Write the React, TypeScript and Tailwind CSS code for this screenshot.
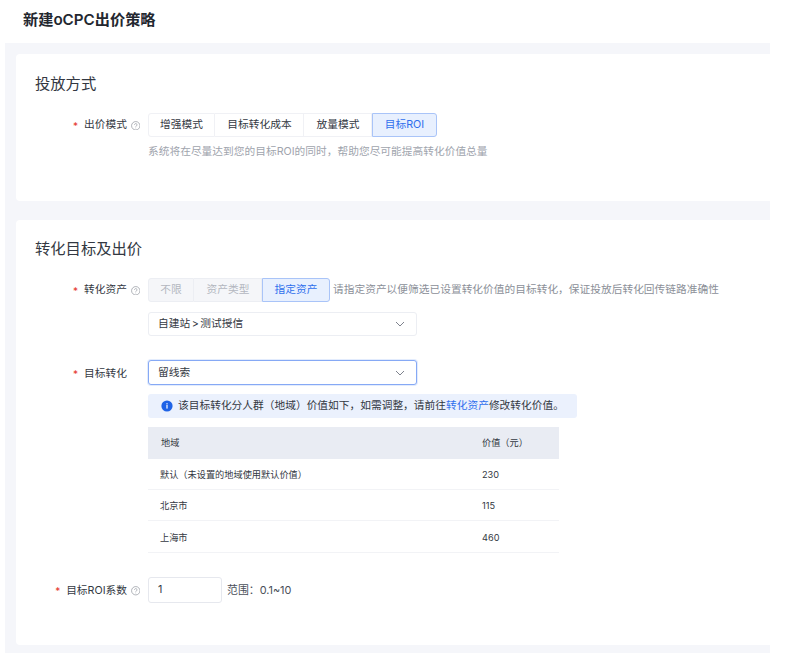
import React from "react";

const FONT = "font-['Inter','Noto_Sans_CJK_SC',sans-serif]";

function Help() {
  return (
    <svg width="9.5" height="9.5" viewBox="0 0 10 10" fill="none" className="ml-[3.5px] shrink-0 text-[#8b8f98]">
      <circle cx="5" cy="5" r="4.4" stroke="currentColor" strokeWidth="0.7" />
      <path d="M3.7 4a1.3 1.3 0 1 1 2 1.1c-.5.3-.7.5-.7 1" stroke="currentColor" strokeWidth="0.7" fill="none" />
      <circle cx="5" cy="7.3" r="0.45" fill="currentColor" />
    </svg>
  );
}

function Chevron() {
  return (
    <svg width="10" height="6" viewBox="0 0 10 6" fill="none" className="text-[#6f7480]">
      <path d="M1 1l4 4 4-4" stroke="currentColor" strokeWidth="0.9" />
    </svg>
  );
}

function Label({ text, help, tall }: { text: string; help?: boolean; tall?: boolean }) {
  return (
    <div
      className={
        "flex w-[113px] shrink-0 items-center justify-end pr-[8px] text-[10.72px] text-[#333842] " +
        (tall ? "h-[26px] pt-[2px]" : "h-6 pt-[1px]")
      }
    >
      <span className="mr-[6px] text-[10px] leading-none text-[#e5352b]">*</span>
      <span>{text}</span>
      {help ? <Help /> : <span className="w-[13px]" />}
    </div>
  );
}

function Seg({ items, active, disabled }: { items: [string, number][]; active: string; disabled?: boolean }) {
  return (
    <div className="flex h-6 text-[10.72px]">
      {items.map(([t, w], i) => {
        const on = t === active;
        return (
          <div
            key={t}
            style={{ width: w }}
            className={
              "flex items-center justify-center border pt-[1px] " +
              (on
                ? "rounded-r-[3px] border-[#a9c4f8] bg-[#e8f0fe] text-[#2f6fed]"
                : disabled
                  ? "border-[#eceef3] bg-[#f5f6f9] text-[#b3b7bf] " + (i === 0 ? "rounded-l-[3px]" : "border-l-0 pl-[1px]")
                  : "border-[#f0f1f5] bg-white text-[#333842] " + (i === 0 ? "rounded-l-[3px]" : "border-l-0 pl-[1px]"))
            }
          >
            {t}
          </div>
        );
      })}
    </div>
  );
}

function Select({ text, focus }: { text: string; focus?: boolean }) {
  return (
    <div
      className={
        "flex w-[269px] items-center justify-between rounded-[3px] border bg-white pl-[9px] pr-[11px] text-[10.72px] text-[#333842] " +
        (focus ? "h-[25px] border-[#86a9f5] shadow-[0_0_0_1px_#e3ecfd]" : "h-6 border-[#eceef3]")
      }
    >
      <span className="pt-[1px] [word-spacing:-1.5px]">{text}</span>
      <Chevron />
    </div>
  );
}

const rows: [string, string, string][] = [
  ["默认（未设置的地域使用默认价值）", "230", "h-[31px] pt-[1px]"],
  ["北京市", "115", "h-[31px] pt-[2px]"],
  ["上海市", "460", "h-[32px] pt-[2px]"],
];

export default function App() {
  return (
    <div className={"h-[663px] w-[785px] overflow-hidden bg-white " + FONT}>
      <div className="flex h-[43px] items-center pb-[3px] pl-[23px] text-[15.2px] font-semibold text-[#23272f]">
        新建oCPC出价策略
      </div>
      <div className="ml-[5px] h-[610px] w-[765px] bg-[#f5f6fa] pl-[11px] pt-[11px]">
        <section className="h-[147px] rounded-l-[4px] bg-white pl-[19px] pt-[20px]">
          <h2 className="text-[15.3px] leading-[20px] text-[#333842]">投放方式</h2>
          <div className="mt-[19px] flex">
            <Label text="出价模式" help />
            <div>
              <Seg items={[["增强模式", 67], ["目标转化成本", 89], ["放量模式", 68], ["目标ROI", 65]]} active="目标ROI" />
              <p className="mt-[7px] text-[10.72px] leading-[15px] text-[#a0a4ad]">
                系统将在尽量达到您的目标ROI的同时，帮助您尽可能提高转化价值总量
              </p>
            </div>
          </div>
        </section>
        <section className="mt-[19px] h-[425px] rounded-l-[4px] bg-white pl-[19px] pt-[19px]">
          <h2 className="text-[15.3px] leading-[20px] text-[#333842]">转化目标及出价</h2>
          <div className="mt-[19px] flex">
            <Label text="转化资产" help />
            <div>
              <div className="flex items-center">
                <Seg items={[["不限", 46], ["资产类型", 68], ["指定资产", 68]]} active="指定资产" disabled />
                <span className="ml-[3px] whitespace-nowrap pt-[1px] text-[10.72px] text-[#8b8f98]">
                  请指定资产以便筛选已设置转化价值的目标转化，保证投放后转化回传链路准确性
                </span>
              </div>
              <div className="mt-[10px]">
                <Select text="自建站 > 测试授信" />
              </div>
            </div>
          </div>
          <div className="mt-[24px] flex">
            <Label text="目标转化" tall />
            <div>
              <Select text="留线索" focus />
              <div className="mt-[9px] flex h-6 w-[429px] items-center rounded-[3px] bg-[#ebf1fd] pl-[13px] text-[10.72px] text-[#333842]">
                <svg width="12" height="12" viewBox="0 0 12 12" className="mr-[5px] shrink-0">
                  <circle cx="6" cy="6" r="5.6" fill="#1f63e6" />
                  <rect x="5.4" y="5" width="1.2" height="3.6" fill="#fff" />
                  <rect x="5.4" y="3.2" width="1.2" height="1.2" fill="#fff" />
                </svg>
                <span className="whitespace-nowrap pt-[1px]">
                  该目标转化分人群（地域）价值如下，如需调整，请前往<span className="text-[#2f6fed]">转化资产</span>修改转化价值。
                </span>
              </div>
              <div className="mt-[9px] w-[411px] text-[9.2px] text-[#333842]">
                <div className="flex h-[32px] items-center bg-[#e9ecf3] pl-[13px]">
                  <span className="w-[321px]">地域</span>
                  <span>价值（元）</span>
                </div>
                {rows.map(([a, b, h]) => (
                  <div key={a} className={"flex items-center border-b border-[#f2f3f6] pl-[12px] " + h}>
                    <span className="w-[322px]">{a}</span>
                    <span>{b}</span>
                  </div>
                ))}
              </div>
            </div>
          </div>
          <div className="mt-[24px] flex items-center">
            <Label text="目标ROI系数" help tall />
            <div className="flex h-[26px] w-[74px] items-center rounded-[3px] border border-[#e6e8ee] bg-white pl-[9px] pt-[1px] text-[10.72px] text-[#333842]">
              1
            </div>
            <span className="ml-[5px] pt-[1px] text-[10.9px] text-[#4a4f59]">范围：0.1~10</span>
          </div>
        </section>
      </div>
    </div>
  );
}
